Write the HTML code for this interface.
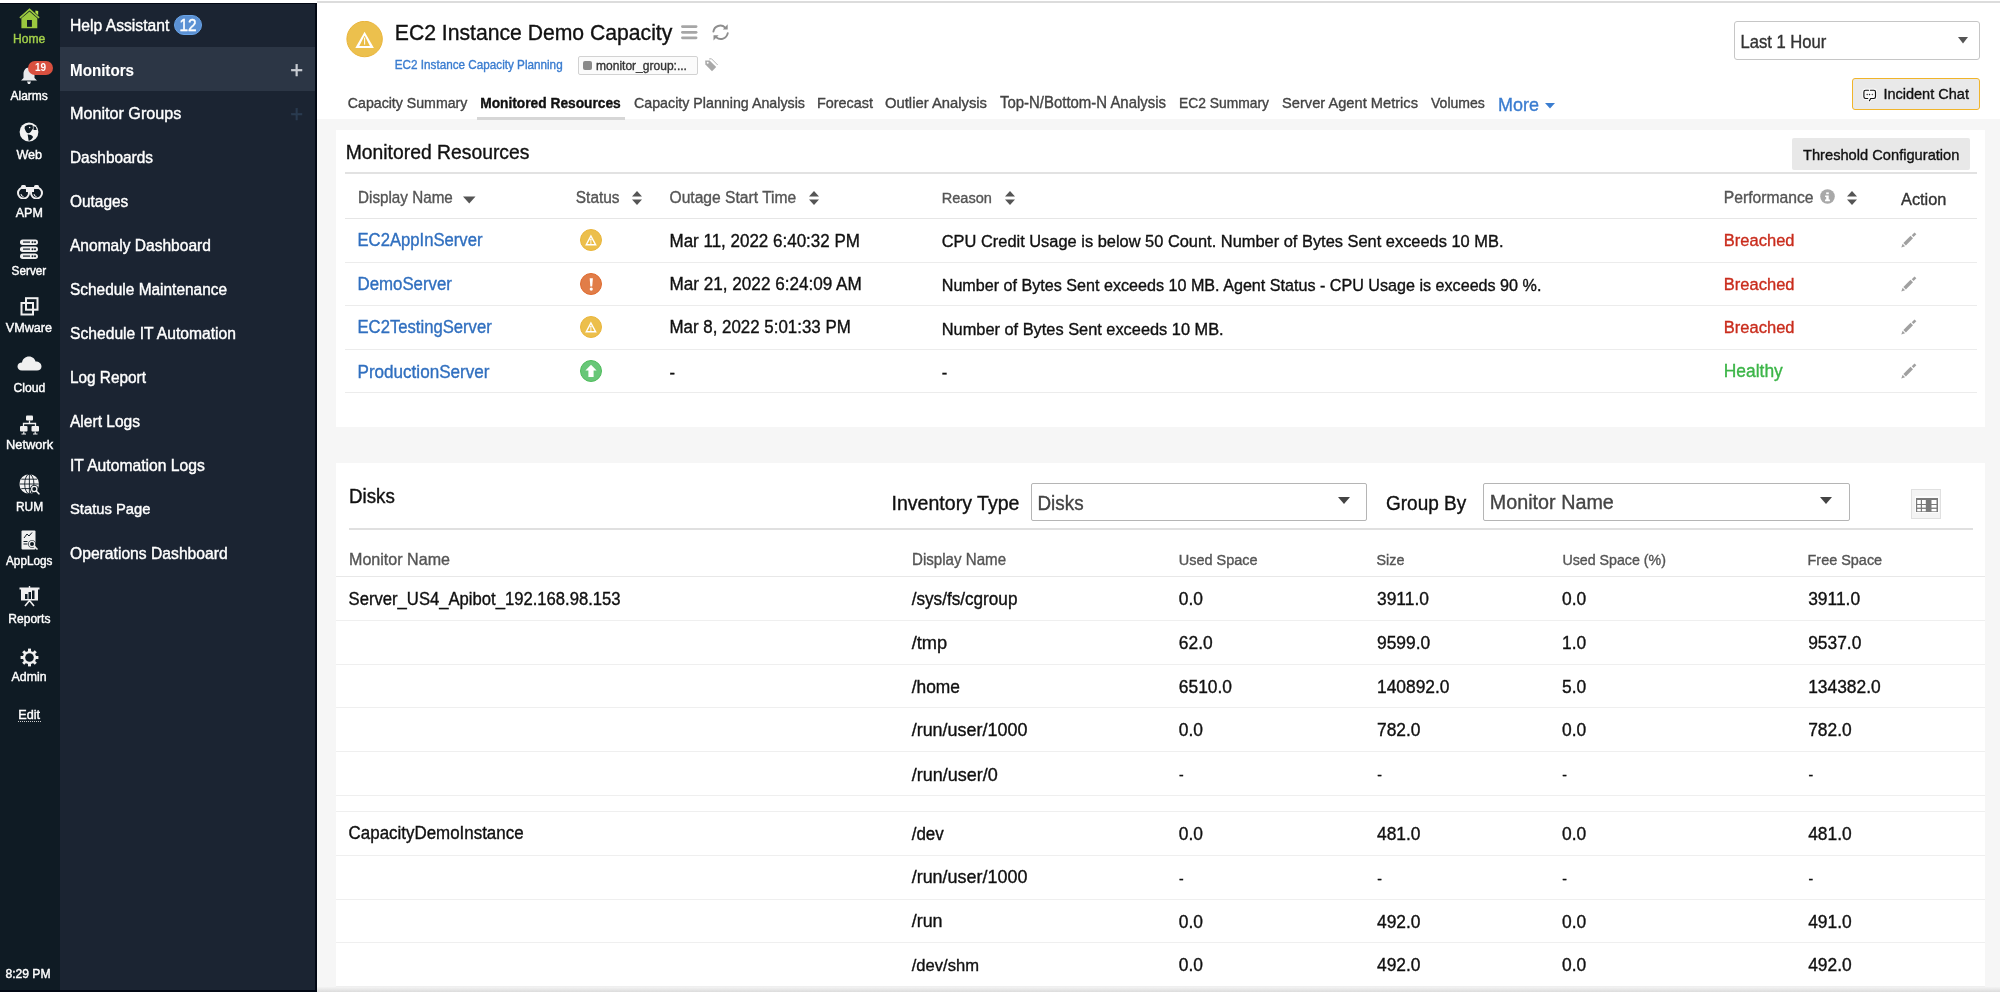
<!DOCTYPE html>
<html><head><meta charset="utf-8"><style>
*{box-sizing:border-box;margin:0;padding:0}
html,body{width:2000px;height:993px;overflow:hidden;background:#fff;font-family:"Liberation Sans",sans-serif}
.abs{position:absolute}
.t{position:absolute;white-space:nowrap;line-height:1;transform:scaleY(1.05);-webkit-text-stroke:0.35px currentColor}
.sb .t{-webkit-text-stroke:0.4px currentColor}
#wrap{position:absolute;left:0;top:0;width:2000px;height:993px;will-change:transform}
</style></head><body><div id="wrap">
<div class="abs" style="left:317px;top:1px;width:1683px;height:2px;background:#dcdcdc;"></div>
<div class="abs" style="left:317px;top:119px;width:1683px;height:872px;background:#f6f6f6;"></div>
<svg class="abs" style="left:346px;top:21px" width="37" height="37" viewBox="0 0 37 37"><circle cx="18.6" cy="18.05" r="17.7" fill="#ecc04d" stroke="#e9b43b" stroke-width="1"/><path d="M18.6 10.8 L27.9 27 L9.3 27 Z" fill="#fff"/><path d="M18.6 14.6 L23.9 24.9 L13.3 24.9 Z" fill="#ebbd45"/><rect x="18.1" y="16.6" width="1.05" height="7" fill="#fff"/></svg>
<div class="t" style="left:394.80px;top:22.28px;font-size:21.17px;color:#111;transform-origin:0 17.92px;">EC2 Instance Demo Capacity</div>
<svg class="abs" style="left:680px;top:24px" width="19" height="17" viewBox="0 0 19 17"><g stroke="#a6a6a6" stroke-width="2.7" stroke-linecap="round"><path d="M2.4 2.6 H16.1"/><path d="M2.4 8.3 H16.1"/><path d="M2.4 13.8 H16.1"/></g></svg>
<svg class="abs" style="left:711px;top:22px" width="20" height="20" viewBox="0 0 20 20"><g fill="none" stroke="#8e8e8e" stroke-width="1.9" stroke-linecap="round"><path d="M2.4 9.6 A7 7 0 0 1 14.2 5.6"/><path d="M16.75 11.2 A7 7 0 0 1 5.2 15.2"/></g><path d="M11.8 7.4 L16.7 7.4 L16.7 2.2Z" fill="#8e8e8e"/><path d="M2.5 13.3 L7.6 13.3 L2.5 18.4Z" fill="#8e8e8e"/></svg>
<div class="t" style="left:394.80px;top:59.49px;font-size:11.71px;color:#3b7dd0;transform-origin:0 9.91px;">EC2 Instance Capacity Planning</div>
<div class="abs" style="left:578px;top:56px;width:120px;height:19px;background:#fbfbfb;border:1px solid #d2d2d2;border-radius:2px"></div>
<div class="abs" style="left:582.5px;top:61.3px;width:9.5px;height:9px;background:#8a8a8a;border-radius:2px"></div>
<div class="t" style="left:596.00px;top:60.01px;font-size:12.04px;color:#333;transform-origin:0 10.19px;">monitor_group:...</div>
<svg class="abs" style="left:704px;top:58px" width="15" height="15" viewBox="0 0 15 15"><path d="M1.2 2.6 L5.6 2.4 L12.2 9 L8 13.2 L1.4 6.6 Z" fill="#a9a9a9"/><circle cx="3.7" cy="4.8" r="1" fill="#fff"/><path d="M5.2 0.9 L7.5 0.8 L13.7 7" fill="none" stroke="#a9a9a9" stroke-width="0.9"/></svg>
<div class="t" style="left:347.80px;top:96.26px;font-size:14.17px;color:#444;transform-origin:0 11.99px;">Capacity Summary</div>
<div class="t" style="left:480.20px;top:96.60px;font-size:13.76px;color:#111;font-weight:bold;transform-origin:0 11.65px;">Monitored Resources</div>
<div class="t" style="left:634.00px;top:96.20px;font-size:14.24px;color:#444;transform-origin:0 12.05px;">Capacity Planning Analysis</div>
<div class="t" style="left:817.00px;top:96.06px;font-size:14.40px;color:#444;transform-origin:0 12.19px;">Forecast</div>
<div class="t" style="left:885.00px;top:95.72px;font-size:14.80px;color:#444;transform-origin:0 12.53px;">Outlier Analysis</div>
<div class="t" style="left:1000.00px;top:95.60px;font-size:14.94px;color:#444;transform-origin:0 12.65px;">Top-N/Bottom-N Analysis</div>
<div class="t" style="left:1179.00px;top:96.53px;font-size:13.85px;color:#444;transform-origin:0 11.72px;">EC2 Summary</div>
<div class="t" style="left:1282.00px;top:95.84px;font-size:14.66px;color:#444;transform-origin:0 12.41px;">Server Agent Metrics</div>
<div class="t" style="left:1431.00px;top:96.35px;font-size:14.06px;color:#444;transform-origin:0 11.90px;">Volumes</div>
<div class="abs" style="left:476.5px;top:117px;width:148.5px;height:3px;background:#d6d6d6;"></div>
<div class="t" style="left:1498.00px;top:96.28px;font-size:17.98px;color:#3b7dd0;transform-origin:0 15.22px;">More</div>
<svg class="abs" style="left:1545px;top:103px" width="10" height="6" viewBox="0 0 10 6"><path d="M0 0 L10 0 L5 5.5Z" fill="#3b7dd0"/></svg>
<div class="abs" style="left:1734px;top:21px;width:246px;height:39px;background:#fff;border:1px solid #c6c6c6;border-radius:3px"></div>
<div class="t" style="left:1740.50px;top:34.74px;font-size:16.62px;color:#333;transform-origin:0 14.06px;">Last 1 Hour</div>
<svg class="abs" style="left:1958px;top:37px" width="10" height="7" viewBox="0 0 10 7"><path d="M0 0 L10 0 L5 6.5Z" fill="#555"/></svg>
<div class="abs" style="left:1852px;top:78px;width:128px;height:32px;background:#e9e9e9;border:1.6px solid #f0b42a;border-radius:3px"></div>
<svg class="abs" style="left:1862px;top:88px" width="16" height="15" viewBox="0 0 16 15"><rect x="2.4" y="2.7" width="10.6" height="7.3" fill="#fafafa"/><g fill="none" stroke="#fafafa" stroke-width="3.2" stroke-linecap="round"><path d="M6.5 2.2 H3.6 Q1.9 2.2 1.9 3.9 V8.8 Q1.9 10.5 3.6 10.5 H5.8"/><path d="M8.4 2.2 H11.8 Q13.5 2.2 13.5 3.9 V8.8 Q13.5 10.5 11.8 10.5 H8.7 L7.4 12.7"/></g><g fill="none" stroke="#111" stroke-width="1.15" stroke-linecap="round"><path d="M6.5 2.2 H3.6 Q1.9 2.2 1.9 3.9 V8.8 Q1.9 10.5 3.6 10.5 H5.8"/><path d="M8.4 2.2 H11.8 Q13.5 2.2 13.5 3.9 V8.8 Q13.5 10.5 11.8 10.5 H8.7 L7.4 12.7"/></g><circle cx="5.2" cy="6.4" r="0.75" fill="#333"/><circle cx="7.5" cy="6.4" r="0.75" fill="#222"/><circle cx="10.4" cy="6.4" r="0.75" fill="#555"/></svg>
<div class="t" style="left:1883.40px;top:87.10px;font-size:14.53px;color:#111;transform-origin:0 12.30px;">Incident Chat</div>
<div class="abs" style="left:336px;top:130px;width:1649px;height:297px;background:#fff;"></div>
<div class="t" style="left:345.70px;top:142.94px;font-size:19.33px;color:#111;transform-origin:0 16.36px;">Monitored Resources</div>
<div class="abs" style="left:1792px;top:138px;width:178px;height:32px;background:#e8e8e8;border-radius:2px"></div>
<div class="t" style="left:1803.00px;top:147.59px;font-size:14.66px;color:#111;transform-origin:0 12.41px;">Threshold Configuration</div>
<div class="abs" style="left:345px;top:172px;width:1632px;height:2px;background:#e2e2e2;"></div>
<div class="t" style="left:358.00px;top:190.35px;font-size:15.24px;color:#555;transform-origin:0 12.90px;">Display Name</div>
<svg class="abs" style="left:463px;top:196px" width="13" height="8" viewBox="0 0 13 8"><path d="M0 0.5 L12.5 0.5 L6.25 7.5Z" fill="#555"/></svg>
<div class="t" style="left:575.80px;top:190.18px;font-size:15.44px;color:#555;transform-origin:0 13.07px;">Status</div>
<svg class="abs" style="left:632px;top:190.5px" width="10" height="14" viewBox="0 0 10 14"><path d="M0 5.5 L5 0 L10 5.5Z M0 8.5 L10 8.5 L5 14Z" fill="#555"/></svg>
<div class="t" style="left:669.50px;top:190.02px;font-size:15.63px;color:#555;transform-origin:0 13.23px;">Outage Start Time</div>
<svg class="abs" style="left:809px;top:190.5px" width="10" height="14" viewBox="0 0 10 14"><path d="M0 5.5 L5 0 L10 5.5Z M0 8.5 L10 8.5 L5 14Z" fill="#555"/></svg>
<div class="t" style="left:941.75px;top:190.92px;font-size:14.57px;color:#555;transform-origin:0 12.33px;">Reason</div>
<svg class="abs" style="left:1004.5px;top:190.5px" width="10" height="14" viewBox="0 0 10 14"><path d="M0 5.5 L5 0 L10 5.5Z M0 8.5 L10 8.5 L5 14Z" fill="#555"/></svg>
<div class="t" style="left:1723.80px;top:189.98px;font-size:15.68px;color:#555;transform-origin:0 13.27px;">Performance</div>
<svg class="abs" style="left:1820px;top:189px" width="15" height="15" viewBox="0 0 15 15"><circle cx="7.5" cy="7.5" r="7.3" fill="#a8a8a8"/><rect x="6.2" y="3.4" width="2.6" height="1.8" fill="#fff"/><path d="M5.1 6.6 H8.7 V10.6 H9.9 V12.2 H5 V10.6 H6.2 V8.1 H5.1Z" fill="#fff"/></svg>
<svg class="abs" style="left:1847px;top:190.5px" width="10" height="14" viewBox="0 0 10 14"><path d="M0 5.5 L5 0 L10 5.5Z M0 8.5 L10 8.5 L5 14Z" fill="#555"/></svg>
<div class="t" style="left:1901.00px;top:190.68px;font-size:16.33px;color:#333;transform-origin:0 13.82px;">Action</div>
<div class="abs" style="left:345px;top:218px;width:1632px;height:1px;background:#e6e6e6;"></div>
<div class="t" style="left:357.50px;top:233.14px;font-size:16.67px;color:#306fbf;transform-origin:0 14.11px;">EC2AppInServer</div>
<svg class="abs" style="left:580px;top:229.25px" width="22" height="22" viewBox="0 0 22 22"><circle cx="11" cy="11" r="10.5" fill="#ecbf4c" stroke="#e9b53c" stroke-width="1"/><path d="M10.9 5.4 L16.8 16.6 L5.1 16.6 Z" fill="#fff"/><path d="M10.9 8.6 L14.4 15 L7.4 15 Z" fill="#ebbb40"/><rect x="10.45" y="10.2" width="0.9" height="4.8" fill="#fff"/><circle cx="10.9" cy="10.4" r="0.75" fill="#fff"/></svg>
<div class="t" style="left:669.50px;top:232.86px;font-size:16.99px;color:#111;transform-origin:0 14.39px;">Mar 11, 2022 6:40:32 PM</div>
<div class="t" style="left:941.75px;top:233.36px;font-size:16.41px;color:#111;transform-origin:0 13.89px;">CPU Credit Usage is below 50 Count. Number of Bytes Sent exceeds 10 MB.</div>
<div class="t" style="left:1723.80px;top:233.27px;font-size:16.52px;color:#c92c1c;transform-origin:0 13.98px;">Breached</div>
<svg class="abs" style="left:1898px;top:230.0px" width="22" height="22" viewBox="0 0 22 22"><g transform="translate(3.3 17.5) rotate(-45)" fill="#a0a0a0"><path d="M0 0 L3.6 -1.75 L3.6 1.75Z"/><rect x="4.7" y="-1.75" width="10.1" height="3.5"/><rect x="16" y="-1.3" width="4" height="2.6"/></g></svg>
<div class="abs" style="left:345px;top:261.6px;width:1632px;height:1px;background:#ececec;"></div>
<div class="t" style="left:357.50px;top:276.59px;font-size:16.84px;color:#306fbf;transform-origin:0 14.26px;">DemoServer</div>
<svg class="abs" style="left:580px;top:272.85px" width="22" height="22" viewBox="0 0 22 22"><circle cx="11" cy="11" r="10.5" fill="#e17d48" stroke="#df6a2e" stroke-width="1"/><path d="M9.7 5.2 H12.9 L12.2 13.6 H10.3Z" fill="#fff"/><circle cx="11.25" cy="16.1" r="1.55" fill="#fff"/></svg>
<div class="t" style="left:669.50px;top:276.34px;font-size:17.14px;color:#111;transform-origin:0 14.51px;">Mar 21, 2022 6:24:09 AM</div>
<div class="t" style="left:941.75px;top:277.19px;font-size:16.14px;color:#111;transform-origin:0 13.66px;">Number of Bytes Sent exceeds 10 MB. Agent Status - CPU Usage is exceeds 90 %.</div>
<div class="t" style="left:1723.80px;top:276.87px;font-size:16.52px;color:#c92c1c;transform-origin:0 13.98px;">Breached</div>
<svg class="abs" style="left:1898px;top:273.6px" width="22" height="22" viewBox="0 0 22 22"><g transform="translate(3.3 17.5) rotate(-45)" fill="#a0a0a0"><path d="M0 0 L3.6 -1.75 L3.6 1.75Z"/><rect x="4.7" y="-1.75" width="10.1" height="3.5"/><rect x="16" y="-1.3" width="4" height="2.6"/></g></svg>
<div class="abs" style="left:345px;top:305.2px;width:1632px;height:1px;background:#ececec;"></div>
<div class="t" style="left:357.50px;top:320.35px;font-size:16.66px;color:#306fbf;transform-origin:0 14.10px;">EC2TestingServer</div>
<svg class="abs" style="left:580px;top:316.45px" width="22" height="22" viewBox="0 0 22 22"><circle cx="11" cy="11" r="10.5" fill="#ecbf4c" stroke="#e9b53c" stroke-width="1"/><path d="M10.9 5.4 L16.8 16.6 L5.1 16.6 Z" fill="#fff"/><path d="M10.9 8.6 L14.4 15 L7.4 15 Z" fill="#ebbb40"/><rect x="10.45" y="10.2" width="0.9" height="4.8" fill="#fff"/><circle cx="10.9" cy="10.4" r="0.75" fill="#fff"/></svg>
<div class="t" style="left:669.50px;top:320.15px;font-size:16.90px;color:#111;transform-origin:0 14.30px;">Mar 8, 2022 5:01:33 PM</div>
<div class="t" style="left:941.75px;top:320.60px;font-size:16.37px;color:#111;transform-origin:0 13.85px;">Number of Bytes Sent exceeds 10 MB.</div>
<div class="t" style="left:1723.80px;top:320.47px;font-size:16.52px;color:#c92c1c;transform-origin:0 13.98px;">Breached</div>
<svg class="abs" style="left:1898px;top:317.2px" width="22" height="22" viewBox="0 0 22 22"><g transform="translate(3.3 17.5) rotate(-45)" fill="#a0a0a0"><path d="M0 0 L3.6 -1.75 L3.6 1.75Z"/><rect x="4.7" y="-1.75" width="10.1" height="3.5"/><rect x="16" y="-1.3" width="4" height="2.6"/></g></svg>
<div class="abs" style="left:345px;top:348.8px;width:1632px;height:1px;background:#ececec;"></div>
<div class="t" style="left:357.50px;top:363.59px;font-size:17.08px;color:#306fbf;transform-origin:0 14.46px;">ProductionServer</div>
<svg class="abs" style="left:580px;top:360.05px" width="22" height="22" viewBox="0 0 22 22"><circle cx="11" cy="11" r="10.5" fill="#68c778" stroke="#4fbc5c" stroke-width="1"/><path d="M11 4.8 L16.6 10.6 L13.6 10.6 L13.6 17 L8.4 17 L8.4 10.6 L5.4 10.6Z" fill="#fff"/></svg>
<div class="t" style="left:669.50px;top:364.08px;font-size:16.50px;color:#111;transform-origin:0 13.97px;">-</div>
<div class="t" style="left:941.75px;top:364.08px;font-size:16.50px;color:#111;transform-origin:0 13.97px;">-</div>
<div class="t" style="left:1723.80px;top:363.32px;font-size:17.40px;color:#3cb548;transform-origin:0 14.73px;">Healthy</div>
<svg class="abs" style="left:1898px;top:360.8px" width="22" height="22" viewBox="0 0 22 22"><g transform="translate(3.3 17.5) rotate(-45)" fill="#a0a0a0"><path d="M0 0 L3.6 -1.75 L3.6 1.75Z"/><rect x="4.7" y="-1.75" width="10.1" height="3.5"/><rect x="16" y="-1.3" width="4" height="2.6"/></g></svg>
<div class="abs" style="left:345px;top:392.4px;width:1632px;height:1px;background:#ececec;"></div>
<div class="abs" style="left:336px;top:463px;width:1649px;height:530px;background:#fff;"></div>
<div class="t" style="left:349.00px;top:487.71px;font-size:18.77px;color:#111;transform-origin:0 15.89px;">Disks</div>
<div class="t" style="left:891.50px;top:493.63px;font-size:19.57px;color:#111;transform-origin:0 16.57px;">Inventory Type</div>
<div class="abs" style="left:1031px;top:482.5px;width:336px;height:38px;background:#fff;border:1px solid #b5b5b5;border-radius:2px"></div>
<div class="t" style="left:1037.50px;top:494.54px;font-size:18.85px;color:#444;transform-origin:0 15.96px;">Disks</div>
<svg class="abs" style="left:1338px;top:497px" width="12" height="8" viewBox="0 0 12 8"><path d="M0 0 L12 0 L6 7Z" fill="#444"/></svg>
<div class="t" style="left:1386.00px;top:494.11px;font-size:19.00px;color:#111;transform-origin:0 16.09px;">Group By</div>
<div class="abs" style="left:1483px;top:482.5px;width:367px;height:38px;background:#fff;border:1px solid #b5b5b5;border-radius:2px"></div>
<div class="t" style="left:1489.80px;top:493.49px;font-size:19.75px;color:#444;transform-origin:0 16.71px;">Monitor Name</div>
<svg class="abs" style="left:1820px;top:497px" width="12" height="8" viewBox="0 0 12 8"><path d="M0 0 L12 0 L6 7Z" fill="#444"/></svg>
<div class="abs" style="left:1911px;top:489px;width:30px;height:30px;background:#f4f4f4;border:1px solid #e0e0e0"></div>
<div class="abs" style="left:1914.5px;top:496px;width:24px;height:17px;background:#fcfcfc;"></div>
<svg class="abs" style="left:1915.7px;top:497.9px" width="22" height="14" viewBox="0 0 22 14"><rect x="0" y="0" width="22" height="14" fill="#7a7a7a"/><g fill="#fff"><rect x="1.2" y="2" width="3.6" height="4.0"/><rect x="1.2" y="7" width="3.6" height="2.6"/><rect x="1.2" y="10.9" width="3.6" height="2.4"/><rect x="6" y="2" width="3.8" height="4.0"/><rect x="6" y="7" width="3.8" height="2.6"/><rect x="6" y="10.9" width="3.8" height="2.4"/><rect x="15.5" y="2" width="5.0" height="4.0"/><rect x="15.5" y="7" width="5.0" height="2.6"/><rect x="15.5" y="10.9" width="5.0" height="2.4"/></g></svg>
<div class="abs" style="left:349px;top:528px;width:1624px;height:2px;background:#e0e0e0;"></div>
<div class="t" style="left:349.00px;top:551.19px;font-size:16.08px;color:#555;transform-origin:0 13.61px;">Monitor Name</div>
<div class="t" style="left:912.00px;top:552.01px;font-size:15.11px;color:#555;transform-origin:0 12.79px;">Display Name</div>
<div class="t" style="left:1178.70px;top:552.53px;font-size:14.50px;color:#555;transform-origin:0 12.27px;">Used Space</div>
<div class="t" style="left:1376.50px;top:552.65px;font-size:14.36px;color:#555;transform-origin:0 12.15px;">Size</div>
<div class="t" style="left:1562.40px;top:552.75px;font-size:14.23px;color:#555;transform-origin:0 12.05px;">Used Space (%)</div>
<div class="t" style="left:1807.50px;top:552.57px;font-size:14.45px;color:#555;transform-origin:0 12.23px;">Free Space</div>
<div class="abs" style="left:336px;top:576px;width:1649px;height:1px;background:#e8e8e8;"></div>
<div class="t" style="left:348.60px;top:591.71px;font-size:16.65px;color:#111;transform-origin:0 14.09px;">Server_US4_Apibot_192.168.98.153</div>
<div class="t" style="left:911.70px;top:591.28px;font-size:17.15px;color:#111;transform-origin:0 14.52px;">/sys/fs/cgroup</div>
<div class="t" style="left:1178.80px;top:591.07px;font-size:17.40px;color:#111;transform-origin:0 14.73px;">0.0</div>
<div class="t" style="left:1377.00px;top:591.07px;font-size:17.40px;color:#111;transform-origin:0 14.73px;">3911.0</div>
<div class="t" style="left:1562.00px;top:591.07px;font-size:17.40px;color:#111;transform-origin:0 14.73px;">0.0</div>
<div class="t" style="left:1808.20px;top:591.07px;font-size:17.40px;color:#111;transform-origin:0 14.73px;">3911.0</div>
<div class="abs" style="left:336px;top:619.8px;width:1649px;height:1px;background:#efefef;"></div>
<div class="t" style="left:911.70px;top:634.15px;font-size:18.25px;color:#111;transform-origin:0 15.45px;">/tmp</div>
<div class="t" style="left:1178.80px;top:634.87px;font-size:17.40px;color:#111;transform-origin:0 14.73px;">62.0</div>
<div class="t" style="left:1377.00px;top:634.87px;font-size:17.40px;color:#111;transform-origin:0 14.73px;">9599.0</div>
<div class="t" style="left:1562.00px;top:634.87px;font-size:17.40px;color:#111;transform-origin:0 14.73px;">1.0</div>
<div class="t" style="left:1808.20px;top:634.87px;font-size:17.40px;color:#111;transform-origin:0 14.73px;">9537.0</div>
<div class="abs" style="left:336px;top:663.6px;width:1649px;height:1px;background:#efefef;"></div>
<div class="t" style="left:911.70px;top:678.69px;font-size:17.37px;color:#111;transform-origin:0 14.71px;">/home</div>
<div class="t" style="left:1178.80px;top:678.67px;font-size:17.40px;color:#111;transform-origin:0 14.73px;">6510.0</div>
<div class="t" style="left:1377.00px;top:678.67px;font-size:17.40px;color:#111;transform-origin:0 14.73px;">140892.0</div>
<div class="t" style="left:1562.00px;top:678.67px;font-size:17.40px;color:#111;transform-origin:0 14.73px;">5.0</div>
<div class="t" style="left:1808.20px;top:678.67px;font-size:17.40px;color:#111;transform-origin:0 14.73px;">134382.0</div>
<div class="abs" style="left:336px;top:707.4px;width:1649px;height:1px;background:#efefef;"></div>
<div class="t" style="left:911.70px;top:722.02px;font-size:17.94px;color:#111;transform-origin:0 15.18px;">/run/user/1000</div>
<div class="t" style="left:1178.80px;top:722.47px;font-size:17.40px;color:#111;transform-origin:0 14.73px;">0.0</div>
<div class="t" style="left:1377.00px;top:722.47px;font-size:17.40px;color:#111;transform-origin:0 14.73px;">782.0</div>
<div class="t" style="left:1562.00px;top:722.47px;font-size:17.40px;color:#111;transform-origin:0 14.73px;">0.0</div>
<div class="t" style="left:1808.20px;top:722.47px;font-size:17.40px;color:#111;transform-origin:0 14.73px;">782.0</div>
<div class="abs" style="left:336px;top:751.2px;width:1649px;height:1px;background:#efefef;"></div>
<div class="t" style="left:911.70px;top:765.75px;font-size:18.01px;color:#111;transform-origin:0 15.25px;">/run/user/0</div>
<div class="t" style="left:1179.10px;top:769.20px;font-size:13.94px;color:#111;transform-origin:0 11.80px;">-</div>
<div class="t" style="left:1377.30px;top:769.20px;font-size:13.94px;color:#111;transform-origin:0 11.80px;">-</div>
<div class="t" style="left:1562.30px;top:769.20px;font-size:13.94px;color:#111;transform-origin:0 11.80px;">-</div>
<div class="t" style="left:1808.50px;top:769.20px;font-size:13.94px;color:#111;transform-origin:0 11.80px;">-</div>
<div class="abs" style="left:336px;top:795.0px;width:1649px;height:1px;background:#efefef;"></div>
<div class="abs" style="left:336px;top:811.0px;width:1649px;height:1px;background:#efefef;"></div>
<div class="t" style="left:348.60px;top:826.47px;font-size:16.93px;color:#111;transform-origin:0 14.33px;">CapacityDemoInstance</div>
<div class="t" style="left:911.70px;top:826.42px;font-size:16.98px;color:#111;transform-origin:0 14.38px;">/dev</div>
<div class="t" style="left:1178.80px;top:826.07px;font-size:17.40px;color:#111;transform-origin:0 14.73px;">0.0</div>
<div class="t" style="left:1377.00px;top:826.07px;font-size:17.40px;color:#111;transform-origin:0 14.73px;">481.0</div>
<div class="t" style="left:1562.00px;top:826.07px;font-size:17.40px;color:#111;transform-origin:0 14.73px;">0.0</div>
<div class="t" style="left:1808.20px;top:826.07px;font-size:17.40px;color:#111;transform-origin:0 14.73px;">481.0</div>
<div class="abs" style="left:336px;top:854.8px;width:1649px;height:1px;background:#efefef;"></div>
<div class="t" style="left:911.70px;top:869.42px;font-size:17.94px;color:#111;transform-origin:0 15.18px;">/run/user/1000</div>
<div class="t" style="left:1179.10px;top:872.80px;font-size:13.94px;color:#111;transform-origin:0 11.80px;">-</div>
<div class="t" style="left:1377.30px;top:872.80px;font-size:13.94px;color:#111;transform-origin:0 11.80px;">-</div>
<div class="t" style="left:1562.30px;top:872.80px;font-size:13.94px;color:#111;transform-origin:0 11.80px;">-</div>
<div class="t" style="left:1808.50px;top:872.80px;font-size:13.94px;color:#111;transform-origin:0 11.80px;">-</div>
<div class="abs" style="left:336px;top:898.6px;width:1649px;height:1px;background:#efefef;"></div>
<div class="t" style="left:911.70px;top:913.24px;font-size:17.91px;color:#111;transform-origin:0 15.16px;">/run</div>
<div class="t" style="left:1178.80px;top:913.67px;font-size:17.40px;color:#111;transform-origin:0 14.73px;">0.0</div>
<div class="t" style="left:1377.00px;top:913.67px;font-size:17.40px;color:#111;transform-origin:0 14.73px;">492.0</div>
<div class="t" style="left:1562.00px;top:913.67px;font-size:17.40px;color:#111;transform-origin:0 14.73px;">0.0</div>
<div class="t" style="left:1808.20px;top:913.67px;font-size:17.40px;color:#111;transform-origin:0 14.73px;">491.0</div>
<div class="abs" style="left:336px;top:942.4px;width:1649px;height:1px;background:#efefef;"></div>
<div class="t" style="left:911.70px;top:958.17px;font-size:16.58px;color:#111;transform-origin:0 14.03px;">/dev/shm</div>
<div class="t" style="left:1178.80px;top:957.47px;font-size:17.40px;color:#111;transform-origin:0 14.73px;">0.0</div>
<div class="t" style="left:1377.00px;top:957.47px;font-size:17.40px;color:#111;transform-origin:0 14.73px;">492.0</div>
<div class="t" style="left:1562.00px;top:957.47px;font-size:17.40px;color:#111;transform-origin:0 14.73px;">0.0</div>
<div class="t" style="left:1808.20px;top:957.47px;font-size:17.40px;color:#111;transform-origin:0 14.73px;">492.0</div>
<div class="abs" style="left:336px;top:986.2px;width:1649px;height:1px;background:#efefef;"></div>
<div class="abs" style="left:317px;top:987px;width:1683px;height:5px;background:linear-gradient(#f3f3f3,#dcdcdc);"></div>
<div class="abs" style="left:0px;top:3px;width:317px;height:989px;background:#020814;"></div>
<div class="abs" style="left:0px;top:4px;width:60px;height:986px;background:#0f1b24;"></div>
<div class="abs" style="left:60px;top:4px;width:255px;height:986px;background:#1b2432;"></div>
<div class="abs" style="left:60px;top:47px;width:255px;height:44px;background:#2c3645;"></div>
<div class="abs" style="left:0;top:3px;width:60px;height:987px"><!-- icon column items -->
<svg class="abs" style="left:19px;top:4.5px" width="22" height="22" viewBox="0 0 22 22"><path d="M0.9 9.8 L10.5 1.4 L20.1 9.8" fill="none" stroke="#9bc83f" stroke-width="1.7"/><path d="M16.4 2.6 L19.2 3 L19.2 7.2 L16.4 4.8Z" fill="#b5e04a"/><path d="M2.4 10.2 L10.5 3.6 L18.3 10.2 L18.3 20.2 L2.4 20.2Z" fill="#9bc83f"/><rect x="8" y="12" width="4.9" height="6.8" fill="#0f1b24"/></svg>
<svg class="abs" style="left:19px;top:62px" width="20" height="20" viewBox="0 0 20 20"><path d="M10 2.5 C6 2.5 4.5 6 4.5 9 L4.5 13 L2 15.5 L18 15.5 L15.5 13 L15.5 9 C15.5 6 14 2.5 10 2.5Z" fill="#e8eaec"/><path d="M8 16.5 L12 16.5 L11 19 L9 19Z" fill="#e8eaec"/></svg>
<div class="abs" style="left:28px;top:58px;width:25px;height:14px;border-radius:7px;background:#d9503f;color:#fff;font-size:10px;line-height:14px;text-align:center;font-weight:bold">19</div>
<svg class="abs" style="left:19.35px;top:119.2px" width="20" height="20" viewBox="0 0 20 20"><circle cx="10" cy="10" r="9.4" fill="#f3f3f3"/><path d="M5.8 4.4 C7.8 2.6 11.2 2.4 13.6 3.2 L14 6.2 C13 7.8 12.4 9.4 10.8 10.8 C9.6 11.6 8.4 11.2 7.6 10.4 C6.6 9.2 6.2 8 5.6 6.6 Z" fill="#0f1b24"/><circle cx="10.6" cy="5.6" r="0.75" fill="#f3f3f3"/><path d="M8.6 12.6 C10.6 12.3 12.8 13.2 14.1 14.9 C13.3 16.8 11.6 18 9.8 19 C9.2 17 9.2 15 8.6 12.6 Z" fill="#0f1b24"/><path d="M14.5 4 L16.8 4.9 L17.8 8 L14.6 8 Z" fill="#0f1b24"/></svg>
<svg class="abs" style="left:17px;top:181px" width="26" height="15" viewBox="0 0 26 15"><circle cx="6.5" cy="9" r="5.5" fill="none" stroke="#f0f0f0" stroke-width="2"/><circle cx="19.5" cy="9" r="5.5" fill="none" stroke="#f0f0f0" stroke-width="2"/><rect x="9" y="3" width="8" height="5" fill="#f0f0f0"/><rect x="4" y="1" width="5" height="4" rx="1.5" fill="#f0f0f0"/><rect x="17" y="1" width="5" height="4" rx="1.5" fill="#f0f0f0"/><path d="M4 10 A2.5 2.5 0 0 0 6.5 12.5" stroke="#f0f0f0" stroke-width="1" fill="none"/><path d="M17 10 A2.5 2.5 0 0 0 19.5 12.5" stroke="#f0f0f0" stroke-width="1" fill="none"/></svg>
<svg class="abs" style="left:19px;top:236px" width="20" height="21" viewBox="0 0 20 21"><rect x="1" y="0.5" width="18" height="5.5" rx="2.7" fill="#f0f0f0"/><rect x="1" y="7.5" width="18" height="5.5" rx="2.7" fill="#f0f0f0"/><rect x="1" y="14.5" width="18" height="5.5" rx="2.7" fill="#f0f0f0"/><rect x="4" y="2.5" width="7" height="1.2" fill="#0f1b24"/><rect x="4" y="9.5" width="7" height="1.2" fill="#0f1b24"/><rect x="4" y="16.5" width="7" height="1.2" fill="#0f1b24"/><circle cx="13.5" cy="3.2" r="1" fill="#0f1b24"/><circle cx="16" cy="3.2" r="1" fill="#0f1b24"/><circle cx="13.5" cy="10.2" r="1" fill="#0f1b24"/><circle cx="16" cy="10.2" r="1" fill="#0f1b24"/><circle cx="13.5" cy="17.2" r="1" fill="#0f1b24"/><circle cx="16" cy="17.2" r="1" fill="#0f1b24"/></svg>
<svg class="abs" style="left:20px;top:294px" width="19" height="19" viewBox="0 0 19 19"><rect x="6" y="1.2" width="11.5" height="11.5" fill="none" stroke="#f0f0f0" stroke-width="2"/><rect x="1.5" y="6" width="11.5" height="11.5" fill="none" stroke="#f0f0f0" stroke-width="2"/></svg>
<svg class="abs" style="left:17px;top:353px" width="25" height="15" viewBox="0 0 25 15"><path d="M5 14.5 C2 14.5 0.5 12.5 0.5 10.5 C0.5 8 2.5 6.5 5 6.5 C5.5 3 8.5 0.5 12 0.5 C15.5 0.5 18 3 18.5 5.5 C22 5.5 24.5 7.5 24.5 10.5 C24.5 13 22.5 14.5 20 14.5 Z" fill="#f0f0f0"/></svg>
<svg class="abs" style="left:19px;top:412px" width="21" height="20" viewBox="0 0 21 20"><rect x="7" y="0.5" width="7" height="5" rx="1" fill="#f0f0f0"/><path d="M10.5 5.5 V8.5 M4.5 11 V8.5 H16.5 V11" stroke="#f0f0f0" stroke-width="1.3" fill="none"/><rect x="1" y="11" width="7.5" height="5.5" rx="1" fill="#f0f0f0"/><rect x="12.5" y="11" width="7.5" height="5.5" rx="1" fill="#f0f0f0"/><path d="M4.8 16.5 V19 M2.5 19 H7 M16.2 16.5 V19 M14 19 H18.5" stroke="#f0f0f0" stroke-width="1.2"/></svg>
<svg class="abs" style="left:19px;top:471px" width="22" height="22" viewBox="0 0 22 22"><circle cx="10.2" cy="10" r="9.8" fill="#f3f3f3"/><g stroke="#0f1b24" stroke-width="0.9" fill="none"><path d="M0.4 10 H20"/><path d="M10.4 0.2 V19.8"/><path d="M2.3 5.2 H18.1 M2.3 14.6 H18.1"/><ellipse cx="10.3" cy="10" rx="4.6" ry="9.8"/></g><circle cx="15.3" cy="15" r="4.1" fill="#0f1b24"/><circle cx="15.3" cy="15" r="2.6" fill="none" stroke="#f3f3f3" stroke-width="1.3"/><path d="M17.2 17 L19.9 19.8" stroke="#f3f3f3" stroke-width="1.6" stroke-linecap="round"/></svg>
<svg class="abs" style="left:20px;top:527px" width="19" height="21" viewBox="0 0 19 21"><rect x="1.5" y="0.5" width="14" height="19" rx="1" fill="#f0f0f0"/><path d="M4 8 L7 4 L9 6 L12 2.5" stroke="#111c26" stroke-width="1" fill="none"/><rect x="3.5" y="11" width="4" height="1" fill="#0f1b24"/><rect x="3.5" y="13.5" width="4" height="1" fill="#0f1b24"/><circle cx="12" cy="14" r="3.8" fill="#0f1b24"/><circle cx="12" cy="14" r="2.6" fill="none" stroke="#f0f0f0" stroke-width="1.2"/><path d="M14 16 L17.5 19.5" stroke="#f0f0f0" stroke-width="1.6"/></svg>
<svg class="abs" style="left:19px;top:583px" width="21" height="21" viewBox="0 0 21 21"><rect x="0.5" y="1.5" width="20" height="2" fill="#f0f0f0"/><rect x="2" y="2.5" width="17" height="12" fill="#f0f0f0"/><rect x="6" y="8" width="2.5" height="5" fill="#0f1b24"/><rect x="9.5" y="6" width="2.5" height="7" fill="#0f1b24"/><rect x="13" y="4.5" width="2.5" height="8.5" fill="#0f1b24"/><path d="M10.5 14.5 L6 20 M10.5 14.5 L15 20" stroke="#f0f0f0" stroke-width="1.6"/><rect x="9.8" y="0" width="1.4" height="2" fill="#f0f0f0"/></svg>
<svg class="abs" style="left:20px;top:645px" width="19" height="19" viewBox="0 0 19 19"><g fill="#f0f0f0"><circle cx="9.5" cy="9.5" r="6.6"/><rect x="8" y="0.6" width="3" height="17.8"/><rect x="0.6" y="8" width="17.8" height="3"/><rect x="8" y="0.6" width="3" height="17.8" transform="rotate(45 9.5 9.5)"/><rect x="8" y="0.6" width="3" height="17.8" transform="rotate(-45 9.5 9.5)"/></g><circle cx="9.5" cy="9.5" r="4.3" fill="#0f1b24"/></svg>

</div><div class="sb"><div class="t" style="left:70.00px;top:17.53px;font-size:15.68px;color:#fff;transform-origin:0 13.27px;">Help Assistant</div>
<div class="t" style="left:70.00px;top:62.96px;font-size:15.17px;color:#fff;font-weight:bold;transform-origin:0 12.84px;-webkit-text-stroke:0.1px #fff;">Monitors</div>
<div class="t" style="left:70.00px;top:105.11px;font-size:16.17px;color:#fff;transform-origin:0 13.69px;">Monitor Groups</div>
<div class="t" style="left:70.00px;top:149.76px;font-size:15.40px;color:#fff;transform-origin:0 13.04px;">Dashboards</div>
<div class="t" style="left:70.00px;top:193.74px;font-size:15.42px;color:#fff;transform-origin:0 13.06px;">Outages</div>
<div class="t" style="left:70.00px;top:237.63px;font-size:15.56px;color:#fff;transform-origin:0 13.17px;">Anomaly Dashboard</div>
<div class="t" style="left:70.00px;top:281.73px;font-size:15.44px;color:#fff;transform-origin:0 13.07px;">Schedule Maintenance</div>
<div class="t" style="left:70.00px;top:325.54px;font-size:15.66px;color:#fff;transform-origin:0 13.26px;">Schedule IT Automation</div>
<div class="t" style="left:70.00px;top:369.80px;font-size:15.35px;color:#fff;transform-origin:0 13.00px;">Log Report</div>
<div class="t" style="left:70.00px;top:413.63px;font-size:15.56px;color:#fff;transform-origin:0 13.17px;">Alert Logs</div>
<div class="t" style="left:70.00px;top:457.51px;font-size:15.70px;color:#fff;transform-origin:0 13.29px;">IT Automation Logs</div>
<div class="t" style="left:70.00px;top:502.28px;font-size:14.79px;color:#fff;transform-origin:0 12.52px;">Status Page</div>
<div class="t" style="left:70.00px;top:545.53px;font-size:15.68px;color:#fff;transform-origin:0 13.27px;">Operations Dashboard</div>
<div class="abs" style="left:173.8px;top:14.8px;width:28.4px;height:20px;background:#5b91d4;border-radius:10px;border:1px solid #69a4e8"></div>
<div class="t" style="left:179.50px;top:18.04px;font-size:15.32px;color:#fff;transform-origin:0 12.96px;">12</div>
<div class="t" style="left:290.20px;top:59.98px;font-size:22.00px;color:#c9cdd3;transform-origin:0 18.62px;">+</div>
<div class="t" style="left:290.20px;top:103.98px;font-size:22.00px;color:#2a3b50;transform-origin:0 18.62px;">+</div>
<div class="t" style="left:13.00px;top:33.06px;font-size:12.10px;color:#a3d04a;transform-origin:0 10.24px;">Home</div>
<div class="t" style="left:10.50px;top:90.35px;font-size:11.99px;color:#fff;transform-origin:0 10.15px;">Alarms</div>
<div class="t" style="left:16.40px;top:148.84px;font-size:12.60px;color:#fff;transform-origin:0 10.66px;">Web</div>
<div class="t" style="left:15.75px;top:206.71px;font-size:12.51px;color:#fff;transform-origin:0 10.59px;">APM</div>
<div class="t" style="left:11.60px;top:265.04px;font-size:11.76px;color:#fff;transform-origin:0 9.96px;">Server</div>
<div class="t" style="left:5.80px;top:322.32px;font-size:12.62px;color:#fff;transform-origin:0 10.68px;">VMware</div>
<div class="t" style="left:13.40px;top:381.69px;font-size:12.18px;color:#fff;transform-origin:0 10.31px;">Cloud</div>
<div class="t" style="left:6.00px;top:439.14px;font-size:12.83px;color:#fff;transform-origin:0 10.86px;">Network</div>
<div class="t" style="left:16.00px;top:501.60px;font-size:11.93px;color:#fff;transform-origin:0 10.10px;">RUM</div>
<div class="t" style="left:6.00px;top:554.63px;font-size:11.77px;color:#fff;transform-origin:0 9.97px;">AppLogs</div>
<div class="t" style="left:8.30px;top:613.49px;font-size:12.06px;color:#fff;transform-origin:0 10.21px;">Reports</div>
<div class="t" style="left:11.60px;top:670.56px;font-size:12.33px;color:#fff;transform-origin:0 10.44px;">Admin</div>
<div class="t" style="left:18.30px;top:708.68px;font-size:12.66px;color:#fff;transform-origin:0 10.72px;">Edit</div>
<div class="t" style="left:5.40px;top:968.34px;font-size:12.12px;color:#fff;transform-origin:0 10.26px;">8:29 PM</div>
<div class="abs" style="left:18px;top:720.5px;width:23px;height:1px;background:transparent;border-top:1px dotted #ccc"></div>
</div></div></body></html>
